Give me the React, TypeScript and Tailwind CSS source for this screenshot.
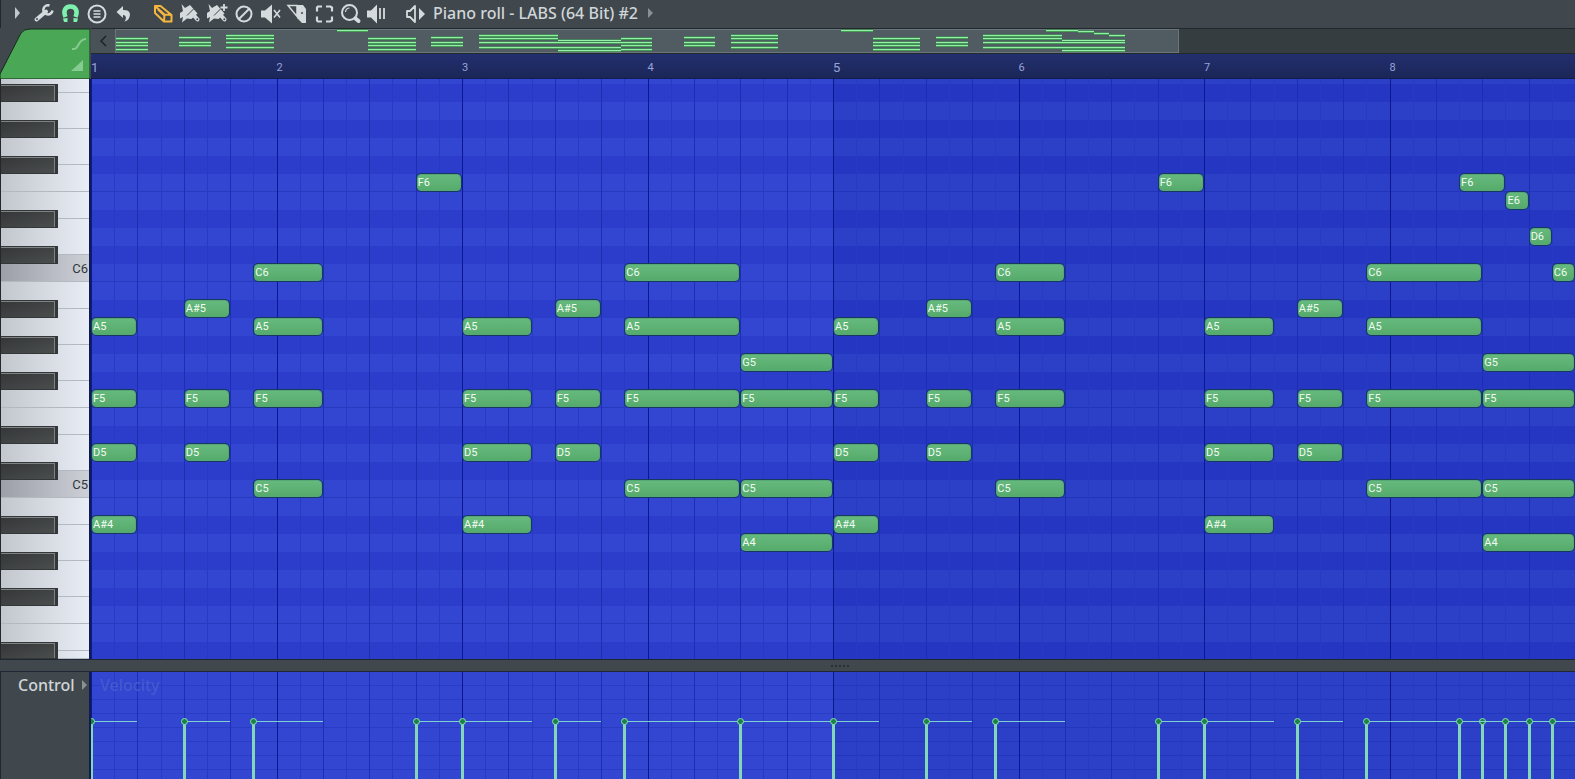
import React, { useState } from "react";

type Note = { pitch: string; start: number; length: number };

const STEPS = 64;
const PITCHES = ["C", "C#", "D", "D#", "E", "F", "F#", "G", "G#", "A", "A#", "B"];

// every pitch from B6 down to D#4, one grid row each
const ROWS: string[] = [];
for (let n = 6 * 12 + 11; n >= 4 * 12 + 3; n--) {
  ROWS.push(PITCHES[n % 12] + Math.floor(n / 12));
}

const WHITE_KEYS = ROWS.filter((r) => !r.includes("#")).concat("D4");

const chord = (start: number, length: number, pitches: string[]): Note[] =>
  pitches.map((pitch) => ({ pitch, start, length }));

const half = (offset: number): Note[] => [
  ...chord(offset, 2, ["A5", "F5", "D5", "A#4"]),
  ...chord(offset + 4, 2, ["A#5", "F5", "D5"]),
  ...chord(offset + 7, 3, ["C6", "A5", "F5", "C5"]),
  ...chord(offset + 14, 2, ["F6"]),
  ...chord(offset + 16, 3, ["A5", "F5", "D5", "A#4"]),
  ...chord(offset + 20, 2, ["A#5", "F5", "D5"]),
  ...chord(offset + 23, 5, ["C6", "A5", "F5", "C5"]),
  ...chord(offset + 28, 4, ["G5", "F5", "C5", "A4"]),
];

const NOTES: Note[] = [
  ...half(0),
  ...half(32),
  { pitch: "F6", start: 59, length: 2 },
  { pitch: "E6", start: 61, length: 1 },
  { pitch: "D6", start: 62, length: 1 },
  { pitch: "C6", start: 63, length: 1 },
];

// one velocity handle for each start position
const HANDLES = NOTES.filter((n, i) => NOTES.findIndex((m) => m.start === n.start) === i);

const stepGrid = "grid grid-cols-[repeat(64,minmax(0,1fr))]";
const rollRows = "grid-rows-[5px_repeat(31,18px)_17px]";

function ToolButton({ label, color = "text-[#d5dadd]", children }: { label: string; color?: string; children: React.ReactNode }) {
  return (
    <button type="button" aria-label={label} title={label} className={`h-[26px] w-[27px] shrink-0 ${color}`}>
      <svg viewBox="0 0 27 26" className="block h-[26px] w-[27px]" fill="none" stroke="currentColor" strokeWidth="2">
        {children}
      </svg>
    </button>
  );
}

const Brush = () => (
  <>
    <path d="M4.500 4L8 8l5-3 7.500 8.500-6 5.500-4.500-.5-5 4 1-5.500-3 1.500V13l3-2z" fill="currentColor" stroke="none" />
    <path d="M16.500 9l-6.500 6.500" stroke="#40484d" strokeWidth="1" />
    <path d="M17 15.500l3.500 4" strokeWidth="4" strokeLinecap="round" />
    <circle cx="20.300" cy="19.300" r="1" fill="#40484d" stroke="none" />
  </>
);

function Toolbar() {
  return (
    <header className="flex h-7 items-start border-l border-[#23282b] bg-[#40484d]">
      <button type="button" aria-label="Menu" className="h-[26px] w-[29px] pl-[13px] text-[#c3c9cc]">
        <svg viewBox="0 0 8 12" className="h-3 w-2" fill="currentColor">
          <path d="M1 0l5 6-5 6z" />
        </svg>
      </button>
      <ToolButton label="Tools">
        <path d="M6.500 19.500L16 11.500" strokeWidth="4" strokeLinecap="round" />
        <path d="M19.500 5.500a4.600 4.600 0 1 0 3 5" strokeWidth="2.500" />
        <circle cx="7" cy="19" r="1" fill="#40484d" stroke="none" />
      </ToolButton>
      <ToolButton label="Snap" color="text-[#7df0ae]">
        <path d="M8.500 17C6 11 8 6.500 13.500 6.500S21 11 18.500 17" strokeWidth="4.500" />
        <path d="M6 18.500l4.500-.5v4H7zM21 18.500l-4.500-.5v4H20z" fill="currentColor" stroke="none" />
      </ToolButton>
      <ToolButton label="Options">
        <circle cx="13" cy="14" r="8.500" />
        <path d="M9.500 11h7M9.500 14h7M9.500 17h7" strokeWidth="1.500" />
      </ToolButton>
      <ToolButton label="Undo">
        <path d="M5.500 12l6.500-6v4c6-.5 8 3 6.500 7-1 3-3 4-5 4.500 2.500-3 1.500-6.500-1.500-6.500v3z" fill="currentColor" stroke="none" />
      </ToolButton>
      <span className="w-3" />
      <ToolButton label="Draw" color="text-[#f5b63e]">
        <path d="M5 6h5.500L21.500 15v6.500H14L5 13zM5 6l9.500 8.500-.5 7M14.500 14.500l7 .5M8 9.500l6.500 6" strokeWidth="2" strokeLinejoin="round" />
      </ToolButton>
      <ToolButton label="Paint">
        <Brush />
      </ToolButton>
      <ToolButton label="Paint drum sequences">
        <Brush />
        <path d="M20 4v7M16.500 7.500h7" strokeWidth="1.800" />
      </ToolButton>
      <ToolButton label="Delete">
        <circle cx="13" cy="14" r="7.500" />
        <path d="M8 19L18 9" />
      </ToolButton>
      <ToolButton label="Mute">
        <path d="M3 10.500h4l7-6v19l-7-6H3z" fill="currentColor" stroke="none" />
        <path d="M16 10l6 7.500M22 10l-6 7.500" strokeWidth="1.600" />
      </ToolButton>
      <ToolButton label="Slice">
        <path d="M3 5.500h9v11z" strokeWidth="1.500" />
        <path d="M12 5h6l3 4v14h-4l-5-5z" fill="currentColor" stroke="none" />
        <circle cx="17" cy="13" r="1" fill="#40484d" stroke="none" />
      </ToolButton>
      <ToolButton label="Select">
        <path d="M5 11.500V7.500l1-1h4M14 6.500h4.500l1.500 1v4M20 16.500v4l-1.500 1H14M10 21.500H6l-1-1v-4" strokeWidth="2.200" />
      </ToolButton>
      <ToolButton label="Zoom">
        <circle cx="10.500" cy="12.500" r="7.500" />
        <path d="M6.500 12a4 4 0 0 1 4-4" strokeWidth="1.200" />
        <path d="M16.500 18.500l3 2.500" strokeWidth="4" strokeLinecap="round" />
      </ToolButton>
      <ToolButton label="Playback">
        <path d="M1 10.500h4l6-6v19l-6-6H1z" fill="currentColor" stroke="none" />
        <path d="M14 8v11M18 8v11" strokeWidth="1.800" />
      </ToolButton>
      <span className="w-[10px]" />
      <ToolButton label="Preview">
        <path d="M4 11h3l5-5v16l-5-5H4z" strokeWidth="1.800" strokeLinejoin="round" />
        <path d="M16 8l6 6-6 6z" fill="currentColor" stroke="none" />
      </ToolButton>
      <button type="button" className="flex h-[26px] items-center gap-[10px] pl-[3px] text-base font-medium text-[#d0d6d9]">
        Piano roll - LABS (64 Bit) #2
        <svg viewBox="0 0 6 10" className="h-[10px] w-[6px] text-[#8a9195]" fill="currentColor">
          <path d="M0 0l5 5-5 5z" />
        </svg>
      </button>
    </header>
  );
}

function Corner() {
  return (
    <svg viewBox="0 0 90 51" className="block h-[51px] w-[90px] bg-[#40484d]">
      <path d="M0 51V46L21 5Q24 1 30 1H90V51Z" fill="#49a756" stroke="#172a1c" />
      <path d="M72 21c8 1 5-10 14-10" fill="none" stroke="#86cb90" strokeWidth="2" />
      <path d="M71 43L83 32v11z" fill="#86cb90" />
    </svg>
  );
}

function Minimap() {
  return (
    <div className="flex h-[26px] border-y border-[#22292c] bg-[#363d41]">
      <button type="button" aria-label="Scroll left" className="flex w-6 shrink-0 items-center justify-center bg-[#485257]">
        <svg viewBox="0 0 8 14" className="h-[14px] w-2" fill="none" stroke="#1d2326" strokeWidth="1.500">
          <path d="M7 2L2 7l5 5" />
        </svg>
      </button>
      <div className="min-w-0 flex-1">
        <div className="h-6 w-[72.9%] border border-[#6a767b] bg-[#505c61]">
          {/* one pixel of height for each semitone, F6 on the first row */}
          <div className={`${stepGrid} h-[22px] w-[95%] grid-rows-[repeat(22,1px)]`}>
            {NOTES.map((note, i) => (
              <span
                key={i}
                className="bg-[#93f0a4] shadow-[0_1px_0_#459c57,0_-1px_0_#45835a]"
                style={{
                  gridRow: ROWS.indexOf(note.pitch) - ROWS.indexOf("F6") + 1,
                  gridColumn: `${note.start + 1} / span ${note.length}`,
                }}
              />
            ))}
          </div>
        </div>
      </div>
    </div>
  );
}

function Ruler() {
  return (
    <div className="grid h-[25px] grid-cols-8 border-b border-[#141d4c] bg-linear-to-b from-[#222f6e] to-[#1b2658] font-[Roboto,sans-serif] text-[#98a3d8]">
      {[1, 2, 3, 4, 5, 6, 7, 8].map((bar) => (
        <span key={bar} className={`leading-7 ${bar % 4 === 1 ? "text-[13px]" : "text-[11px]"}`}>
          {bar}
        </span>
      ))}
    </div>
  );
}

function keyHeight(key: string, index: number) {
  if (index === 0) return "h-[14px]";
  if (key === "D4") return "h-2";
  return "AGD".includes(key[0]) ? "h-9" : "h-[27px]";
}

function Keyboard() {
  return (
    <div className="relative overflow-hidden border-r-2 border-[#0f1c50] border-l border-l-[#23282b]">
      {WHITE_KEYS.map((key, i) => (
        <button
          key={key}
          type="button"
          aria-label={key}
          className={`block w-full border-b border-[#b3b9c1] bg-linear-to-r pr-px text-right font-[Roboto,sans-serif] text-[13px] leading-7 text-[#33383c] ${keyHeight(key, i)} ${
            key[0] === "C" ? "from-[#9c9fa8] to-[#cdd0d7]" : "from-[#c2c6cd] to-[#e9eef6]"
          }`}
        >
          {key[0] === "C" && key}
        </button>
      ))}
      <div className={`pointer-events-none absolute inset-y-0 left-0 grid w-[57px] ${rollRows}`}>
        {ROWS.map((row) => (
          <span
            key={row}
            className={row.includes("#") ? "border-y border-r-[3px] border-[#343738] bg-linear-to-br from-[#343637] to-[#4b4e4f] shadow-[inset_-1px_1px_0_#7e8284]" : ""}
          />
        ))}
      </div>
    </div>
  );
}

function StepLines() {
  return (
    <div className={`pointer-events-none absolute inset-0 ${stepGrid}`}>
      {Array.from({ length: STEPS }, (_, i) => (
        <span
          key={i}
          className={`border-l ${i % 8 === 0 ? "border-[#0c1793]" : i % 2 === 0 ? "border-[#1c2eb2]" : "border-[#273ac1]"} ${
            i >= 32 ? "bg-[#0a1e96]/15" : ""
          }`}
        />
      ))}
    </div>
  );
}

function NoteGrid() {
  return (
    <div className="relative overflow-hidden">
      <div className={`grid ${rollRows}`}>
        {ROWS.map((row) => (
          <div
            key={row}
            className={`${row.includes("#") ? "bg-[#2b3dca]" : "bg-[#3246d1]"} ${
              /^[FC]\d/.test(row) ? "border-b border-[#2739be]" : ""
            }`}
          />
        ))}
      </div>
      <StepLines />
      <div className={`absolute inset-0 ${stepGrid} ${rollRows}`}>
        {NOTES.map((note, i) => (
          <button
            key={i}
            type="button"
            className="mx-px mb-px overflow-hidden rounded-[4px] border border-[#57a877] bg-linear-to-b from-[#66b97d] to-[#55ab6c] text-left font-[Roboto,sans-serif] text-[11px] leading-[15px] whitespace-nowrap text-[#f0fbf2] shadow-[0_0_0_1px_#17385f]"
            style={{ gridRow: ROWS.indexOf(note.pitch) + 1, gridColumn: `${note.start + 1} / span ${note.length}` }}
          >
            {note.pitch}
          </button>
        ))}
      </div>
    </div>
  );
}

function VelocityLane() {
  return (
    <div className="relative overflow-hidden bg-[#3246d1]">
      <div className="absolute inset-0 bg-[repeating-linear-gradient(to_bottom,transparent_0_13px,#293cc4_13px_14px)]" />
      <StepLines />
      <p className="absolute top-px left-[9px] text-base font-medium text-[#4459cf]">Velocity</p>
      <div className={`absolute inset-0 pt-[45px] ${stepGrid}`}>
        {HANDLES.map((note) => (
          <div
            key={note.start}
            className="relative row-start-1"
            style={{ gridColumn: `${note.start + 1} / span ${note.length}` }}
          >
            <span className="absolute top-1 left-0 h-px w-full bg-[#7fd0d2]" />
            <span className="absolute top-1 bottom-0 -left-px w-[3px] bg-[#84d6b9]" />
            <span className="absolute top-[1px] -left-[3px] h-[7px] w-[7px] rounded-full border border-[#86e3ae] bg-[#1e7f48]" />
          </div>
        ))}
      </div>
    </div>
  );
}

export default function App() {
  const [lane] = useState("Control");

  return (
    <main className="flex min-h-screen flex-col overflow-hidden bg-[#40484d] font-['Noto_Sans',sans-serif] select-none">
      <Toolbar />
      <div className="grid grid-cols-[91px_minmax(0,1fr)]">
        <Corner />
        <div>
          <Minimap />
          <Ruler />
        </div>
        <Keyboard />
        <NoteGrid />
      </div>
      <div className="flex h-[13px] items-center justify-center border-y border-[#1f2735] pl-[104px]">
        <span className="flex gap-[2px]">
          {[0, 1, 2, 3, 4].map((dot) => (
            <i key={dot} className="h-[2px] w-[2px] bg-[#2b3033]" />
          ))}
        </span>
      </div>
      <div className="grid flex-1 grid-cols-[91px_minmax(0,1fr)]">
        <div className="border-r-2 border-l border-[#0f1c50] border-l-[#23282b]">
          <button type="button" className="flex items-center gap-[7px] pt-px pl-[17px] text-base font-medium text-[#d0d6d9]">
            {lane}
            <svg viewBox="0 0 6 10" className="h-[10px] w-[6px] text-[#8a9195]" fill="currentColor">
              <path d="M0 0l5 5-5 5z" />
            </svg>
          </button>
        </div>
        <VelocityLane />
      </div>
    </main>
  );
}
